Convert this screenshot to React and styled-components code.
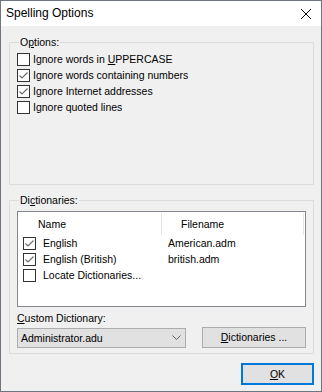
import React from 'react';
import styled, { createGlobalStyle } from 'styled-components';

const Global = createGlobalStyle`
  html, body { margin: 0; padding: 0; background: #ffffff; }
  body { font-family: "Liberation Sans", Arial, sans-serif; }
`;

const Window = styled.div`
  width: 322px;
  height: 392px;
  box-sizing: border-box;
  border: 1px solid #6e7480;
  background: #f0f0f0;
  display: flex;
  flex-direction: column;
  font-size: 10.5px;
  line-height: 13px;
  color: #000;
`;

const TitleBar = styled.div`
  height: 25px;
  flex: none;
  background: #ffffff;
  display: flex;
  align-items: center;
  justify-content: space-between;
  padding: 0 9px 0 5px;
  font-size: 12px;
`;

const Body = styled.div`
  flex: 1;
  display: flex;
  flex-direction: column;
  padding: 16px 7px 0 8px;
`;

const GroupBox = styled.div`
  position: relative;
  box-sizing: border-box;
  height: ${(p) => p.$h}px;
  margin-top: ${(p) => p.$mt || 0}px;
  border: 1px solid #dcdcdc;
  padding: 10px 7px 0 7px;
  display: flex;
  flex-direction: column;
`;

const Caption = styled.span`
  position: absolute;
  top: -7px;
  left: 9px;
  padding: 0 1px;
  background: #f0f0f0;
`;

const CheckRow = styled.div`
  display: flex;
  align-items: flex-start;
  height: 16px;
  gap: 3px;
`;

const Box = styled.span`
  width: 13px;
  height: 13px;
  box-sizing: border-box;
  border: 1px solid #333333;
  background: #ffffff;
  flex: none;
  display: block;
`;

const Acc = styled.span`
  text-decoration: underline;
  text-underline-offset: 1px;
`;

const List = styled.div`
  box-sizing: border-box;
  height: 96px;
  border: 1px solid #828790;
  background: #ffffff;
  display: flex;
  flex-direction: column;
`;

const Header = styled.div`
  display: grid;
  grid-template-columns: 144px 142px;
  height: 23px;
`;

const HeadCell = styled.div`
  display: flex;
  align-items: center;
  padding-left: ${(p) => p.$pl}px;
  border-right: 1px solid #e5e5e5;
  margin: 1px 0 0;
`;

const ListRows = styled.div`
  padding: 2px 0 0 5px;
  display: flex;
  flex-direction: column;
`;

const ListRow = styled.div`
  display: grid;
  grid-template-columns: 13px 118px 1fr;
  column-gap: 7px;
  height: 16px;
  align-items: start;
`;

const Label = styled.div`
  margin-top: 5px;
  height: 13px;
`;

const Controls = styled.div`
  display: flex;
  align-items: flex-start;
  justify-content: space-between;
  margin-top: 2px;
`;

const Combo = styled.div`
  box-sizing: border-box;
  width: 169px;
  height: 20px;
  margin-top: 1px;
  border: 1px solid #adadad;
  background: #e1e1e1;
  display: flex;
  align-items: center;
  justify-content: space-between;
  padding: 0 4px 0 3px;
`;

const Button = styled.div`
  box-sizing: border-box;
  width: ${(p) => p.$w}px;
  height: ${(p) => p.$h || 21}px;
  border: ${(p) => (p.$def ? '2px solid #0078d7' : '1px solid #adadad')};
  background: #e1e1e1;
  display: flex;
  align-items: center;
  justify-content: center;
`;

const Footer = styled.div`
  display: flex;
  justify-content: flex-end;
  margin-top: 9px;
`;

const Check = ({ on }) => (
  <Box>
    {on && (
      <svg width="11" height="11" viewBox="0 0 11 11" style={{ display: 'block' }}>
        <polyline points="1.5,5.5 4,8 9.5,2.5" fill="none" stroke="#6a6a6a" strokeWidth="1.1" />
      </svg>
    )}
  </Box>
);

const options = [
  { on: false, text: <>Ignore words in <Acc>U</Acc>PPERCASE</> },
  { on: true, text: 'Ignore words containing numbers' },
  { on: true, text: 'Ignore Internet addresses' },
  { on: false, text: 'Ignore quoted lines' },
];

const dicts = [
  { on: true, name: 'English', file: 'American.adm' },
  { on: true, name: 'English (British)', file: 'british.adm' },
  { on: false, name: 'Locate Dictionaries...', file: '' },
];

export default function App() {
  return (
    <>
      <Global />
      <Window>
        <TitleBar>
          <span>Spelling Options</span>
          <svg width="12" height="12" viewBox="0 0 12 12">
            <path d="M1 1 L11 11 M11 1 L1 11" stroke="#000" strokeWidth="1" />
          </svg>
        </TitleBar>
        <Body>
          <GroupBox $h={143}>
            <Caption>O<Acc>p</Acc>tions:</Caption>
            {options.map((o, i) => (
              <CheckRow key={i}>
                <Check on={o.on} />
                <span>{o.text}</span>
              </CheckRow>
            ))}
          </GroupBox>
          <GroupBox $h={154} $mt={15}>
            <Caption>Di<Acc>c</Acc>tionaries:</Caption>
            <List>
              <Header>
                <HeadCell $pl={20}>Name</HeadCell>
                <HeadCell $pl={19}>Filename</HeadCell>
              </Header>
              <ListRows>
                {dicts.map((d, i) => (
                  <ListRow key={i}>
                    <Check on={d.on} />
                    <span>{d.name}</span>
                    <span>{d.file}</span>
                  </ListRow>
                ))}
              </ListRows>
            </List>
            <Label><Acc>C</Acc>ustom Dictionary:</Label>
            <Controls>
              <Combo>
                <span>Administrator.adu</span>
                <svg width="9" height="6" viewBox="0 0 9 6">
                  <polyline points="0.5,0.5 4.5,4.5 8.5,0.5" fill="none" stroke="#606060" strokeWidth="1" />
                </svg>
              </Combo>
              <Button $w={104}><span><Acc>D</Acc>ictionaries ...</span></Button>
            </Controls>
          </GroupBox>
          <Footer>
            <Button $w={73} $h={22} $def><span><Acc>O</Acc>K</span></Button>
          </Footer>
        </Body>
      </Window>
    </>
  );
}
